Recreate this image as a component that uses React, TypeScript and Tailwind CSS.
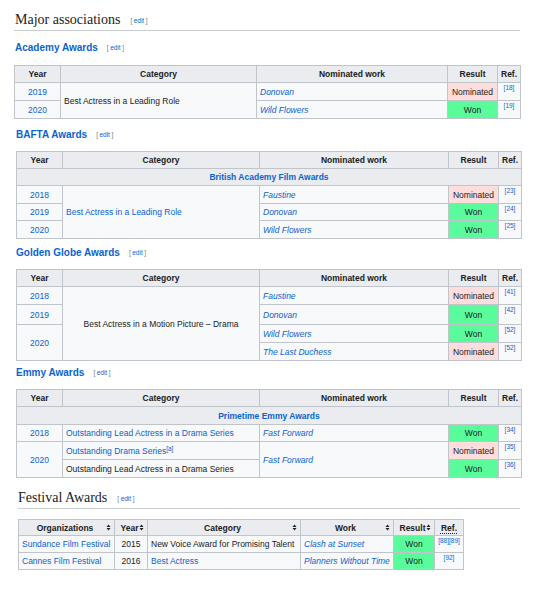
import React from "react";

const L = "text-[#0b63ce]";
const TH = "border border-[#c0c5cc] bg-[#eaecf0] font-bold text-center px-[3px] py-0";
const TD = "border border-[#c0c5cc] bg-[#f8f9fa] px-[3px] py-0";
const WON = "border border-[#c0c5cc] bg-[#5afb9b] text-center px-[3px] py-0";
const NOM = "border border-[#c0c5cc] bg-[#ffdddd] text-center px-[3px] py-0";

function Edit({ big }: { big?: boolean }) {
  return (
    <span className={`${big ? "ml-[10px]" : "ml-[9px]"} font-['Liberation_Sans',Arial,sans-serif] font-normal text-[6.5px] text-[#72777d] align-middle`}>
      [<span className={`${L} mx-[1.5px]`}>edit</span>]
    </span>
  );
}

function H2({ children, className = "" }: { children: React.ReactNode; className?: string }) {
  return (
    <div className={`h-[21px] border-b border-[#c8ccd1] font-['Liberation_Serif','Times_New_Roman',serif] text-[14px] leading-[20px] text-[#202122] ${className}`}>
      {children}
      <Edit big />
    </div>
  );
}

function H3({ children, className = "" }: { children: React.ReactNode; className?: string }) {
  return (
    <div className={`h-[16px] leading-[16px] font-bold text-[10px] ${L} ${className}`}>
      {children}
      <Edit />
    </div>
  );
}

function Ref({ r }: { r: string }) {
  return (
    <td className={`${TD} align-top text-center pt-[1px]`}>
      <span className={`${L} text-[6.5px] leading-[8px] block whitespace-nowrap`}>{r}</span>
    </td>
  );
}

function Head() {
  return (
    <tr className="h-[17px]">
      <th className={TH}>Year</th>
      <th className={TH}>Category</th>
      <th className={TH}>Nominated work</th>
      <th className={TH}>Result</th>
      <th className={TH}>Ref.</th>
    </tr>
  );
}

function Cols({ w }: { w: number[] }) {
  return (
    <colgroup>
      {w.map((x, i) => (
        <col key={i} style={{ width: x }} />
      ))}
    </colgroup>
  );
}

const TABLE = "border-collapse table-fixed text-[8.5px] leading-[12px] text-[#202122]";

function Sort() {
  return (
    <svg width="5" height="7" viewBox="0 0 5 7" className="block shrink-0">
      <path d="M2.5 0.5 L4.5 3 L0.5 3 Z" fill="#202122" />
      <path d="M2.5 6.5 L4.5 4 L0.5 4 Z" fill="#202122" />
    </svg>
  );
}

function SortTh({ children }: { children: React.ReactNode }) {
  return (
    <th className={TH}>
      <div className="flex items-center justify-between pl-[2px] h-[12px]">
        <span className="flex-1 text-center">{children}</span>
        <Sort />
      </div>
    </th>
  );
}

export default function App() {
  const other = [46, 197, 189, 50, 23];
  return (
    <div className="w-[540px] h-[592px] bg-white font-['Liberation_Sans',Arial,sans-serif] text-[#202122]">
      <div className="pl-[14px] pr-[20px] pt-[10px]">
        <H2 className="pl-[1px]">Major associations</H2>

        <H3 className="mt-[9px] mb-[9px] pl-[1px]">Academy Awards</H3>
        <table className={`${TABLE} w-[506px]`}>
          <Cols w={[46, 196, 191, 50, 23]} />
          <tbody>
            <Head />
            <tr className="h-[18px]">
              <td className={`${TD} text-center ${L}`}>2019</td>
              <td className={TD} rowSpan={2}>Best Actress in a Leading Role</td>
              <td className={`${TD} italic ${L}`}>Donovan</td>
              <td className={NOM}>Nominated</td>
              <Ref r="[18]" />
            </tr>
            <tr className="h-[18px]">
              <td className={`${TD} text-center ${L}`}>2020</td>
              <td className={`${TD} italic ${L}`}>Wild Flowers</td>
              <td className={WON}>Won</td>
              <Ref r="[19]" />
            </tr>
          </tbody>
        </table>

        <div className="pl-[2px]">
          <H3 className="mt-[8px] mb-[8px]">BAFTA Awards</H3>
          <table className={`${TABLE} w-[505px]`}>
            <Cols w={other} />
            <tbody>
              <Head />
              <tr className="h-[17px]">
                <th className={`${TH} ${L}`} colSpan={5}>British Academy Film Awards</th>
              </tr>
              <tr className="h-[18px]">
                <td className={`${TD} text-center ${L}`}>2018</td>
                <td className={`${TD} ${L}`} rowSpan={3}>Best Actress in a Leading Role</td>
                <td className={`${TD} italic ${L}`}>Faustine</td>
                <td className={NOM}>Nominated</td>
                <Ref r="[23]" />
              </tr>
              <tr className="h-[17px]">
                <td className={`${TD} text-center ${L}`}>2019</td>
                <td className={`${TD} italic ${L}`}>Donovan</td>
                <td className={WON}>Won</td>
                <Ref r="[24]" />
              </tr>
              <tr className="h-[18px]">
                <td className={`${TD} text-center ${L}`}>2020</td>
                <td className={`${TD} italic ${L}`}>Wild Flowers</td>
                <td className={WON}>Won</td>
                <Ref r="[25]" />
              </tr>
            </tbody>
          </table>

          <H3 className="mt-[6px] mb-[8px]">Golden Globe Awards</H3>
          <table className={`${TABLE} w-[505px]`}>
            <Cols w={other} />
            <tbody>
              <Head />
              <tr className="h-[18px]">
                <td className={`${TD} text-center ${L}`}>2018</td>
                <td className={`${TD} text-center`} rowSpan={4}>Best Actress in a Motion Picture – Drama</td>
                <td className={`${TD} italic ${L}`}>Faustine</td>
                <td className={NOM}>Nominated</td>
                <Ref r="[41]" />
              </tr>
              <tr className="h-[20px]">
                <td className={`${TD} text-center ${L}`}>2019</td>
                <td className={`${TD} italic ${L}`}>Donovan</td>
                <td className={WON}>Won</td>
                <Ref r="[42]" />
              </tr>
              <tr className="h-[18px]">
                <td className={`${TD} text-center ${L}`} rowSpan={2}>2020</td>
                <td className={`${TD} italic ${L}`}>Wild Flowers</td>
                <td className={WON}>Won</td>
                <Ref r="[52]" />
              </tr>
              <tr className="h-[18px]">
                <td className={`${TD} italic ${L}`}>The Last Duchess</td>
                <td className={NOM}>Nominated</td>
                <Ref r="[52]" />
              </tr>
            </tbody>
          </table>

          <H3 className="mt-[4px] mb-[8px]">Emmy Awards</H3>
          <table className={`${TABLE} w-[505px]`}>
            <Cols w={other} />
            <tbody>
              <Head />
              <tr className="h-[18px]">
                <th className={`${TH} ${L}`} colSpan={5}>Primetime Emmy Awards</th>
              </tr>
              <tr className="h-[17px]">
                <td className={`${TD} text-center ${L}`}>2018</td>
                <td className={`${TD} ${L}`}>Outstanding Lead Actress in a Drama Series</td>
                <td className={`${TD} italic ${L}`}>Fast Forward</td>
                <td className={WON}>Won</td>
                <Ref r="[34]" />
              </tr>
              <tr className="h-[18px]">
                <td className={`${TD} text-center ${L}`} rowSpan={2}>2020</td>
                <td className={`${TD} ${L}`}>
                  Outstanding Drama Series<sup className="text-[6.5px] leading-[0] top-[-3px]">[a]</sup>
                </td>
                <td className={`${TD} italic ${L}`} rowSpan={2}>Fast Forward</td>
                <td className={NOM}>Nominated</td>
                <Ref r="[35]" />
              </tr>
              <tr className="h-[18px]">
                <td className={TD}>Outstanding Lead Actress in a Drama Series</td>
                <td className={WON}>Won</td>
                <Ref r="[36]" />
              </tr>
            </tbody>
          </table>
        </div>

        <div className="pl-[4px]">
          <H2 className="mt-[10px]">Festival Awards</H2>
          <table className={`${TABLE} w-[445px] mt-[10px]`}>
            <Cols w={[96, 33, 153, 93, 41, 29]} />
            <tbody>
              <tr className="h-[16px]">
                <SortTh>Organizations</SortTh>
                <SortTh>Year</SortTh>
                <SortTh>Category</SortTh>
                <SortTh>Work</SortTh>
                <SortTh>Result</SortTh>
                <th className={TH}>
                  <span className="underline decoration-dotted underline-offset-2">Ref.</span>
                </th>
              </tr>
              <tr className="h-[17px]">
                <td className={`${TD} ${L}`}>Sundance Film Festival</td>
                <td className={`${TD} text-center`}>2015</td>
                <td className={`${TD} whitespace-nowrap`}>New Voice Award for Promising Talent</td>
                <td className={`${TD} italic ${L}`}>Clash at Sunset</td>
                <td className={WON}>Won</td>
                <Ref r="[88][89]" />
              </tr>
              <tr className="h-[17px]">
                <td className={`${TD} ${L}`}>Cannes Film Festival</td>
                <td className={`${TD} text-center`}>2016</td>
                <td className={`${TD} ${L}`}>Best Actress</td>
                <td className={`${TD} italic ${L} whitespace-nowrap`}>Planners Without Time</td>
                <td className={WON}>Won</td>
                <Ref r="[92]" />
              </tr>
            </tbody>
          </table>
        </div>
      </div>
    </div>
  );
}
